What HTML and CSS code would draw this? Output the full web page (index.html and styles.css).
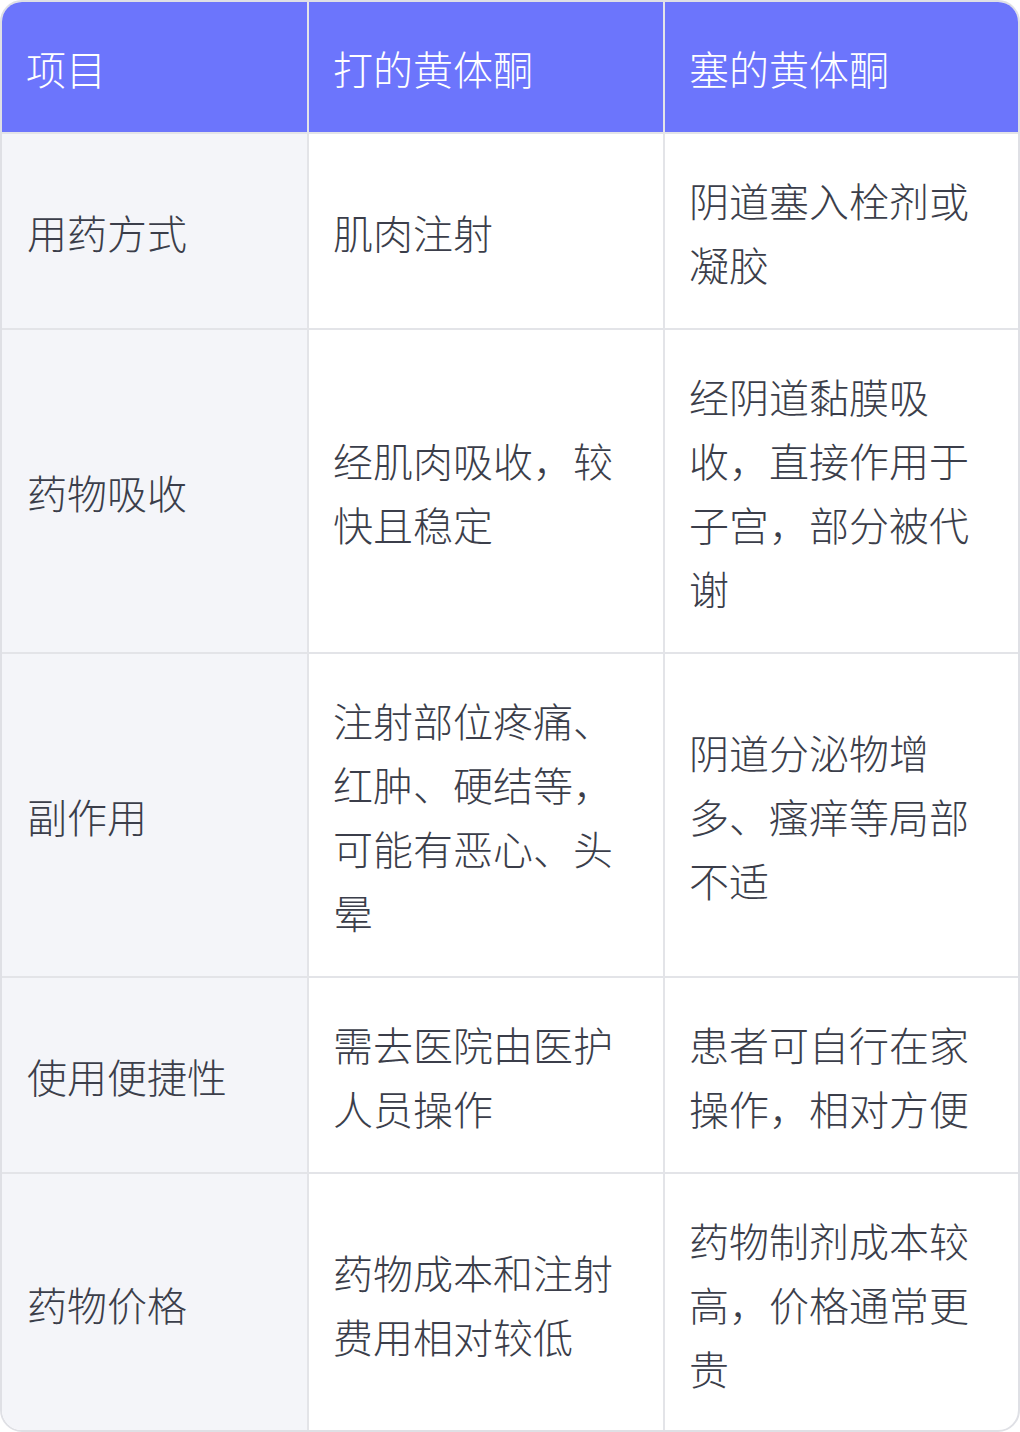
FILE: index.html
```html
<!DOCTYPE html>
<html lang="zh-CN">
<head>
<meta charset="utf-8">
<link rel="stylesheet" href="styles.css">
</head>
<body>
<div class="wrap">
<table class="cmp">
<colgroup><col class="c1"><col class="c2"><col class="c3"></colgroup>
<thead>
<tr><th>项目</th><th>打的黄体酮</th><th>塞的黄体酮</th></tr>
</thead>
<tbody>
<tr><td class="key">用药方式</td><td>肌肉注射</td><td>阴道塞入栓剂或凝胶</td></tr>
<tr><td class="key">药物吸收</td><td>经肌肉吸收，较快且稳定</td><td>经阴道黏膜吸收，直接作用于子宫，部分被代谢</td></tr>
<tr><td class="key">副作用</td><td>注射部位疼痛、红肿、硬结等，可能有恶心、头晕</td><td>阴道分泌物增多、瘙痒等局部不适</td></tr>
<tr><td class="key">使用便捷性</td><td>需去医院由医护人员操作</td><td>患者可自行在家操作，相对方便</td></tr>
<tr><td class="key">药物价格</td><td>药物成本和注射费用相对较低</td><td>药物制剂成本较高，价格通常更贵</td></tr>
</tbody>
</table>
</div>
</body>
</html>
```
FILE: styles.css
```css
html, body {
  margin: 0;
  padding: 0;
  background: #ffffff;
}
.wrap {
  width: 1020px;
  box-sizing: border-box;
  border: 2px solid #dfe0e5;
  border-radius: 22px;
  overflow: hidden;
}
.cmp {
  width: 100%;
  table-layout: fixed;
  border-collapse: separate;
  border-spacing: 0;
  font-family: "Noto Sans CJK SC", "Noto Sans", sans-serif;
  font-size: 40px;
  line-height: 64px;
  color: #3b3e4a;
}
.c1 { width: 307px; }
.c2 { width: 356px; }
.c3 { width: auto; }
.cmp th, .cmp td {
  text-align: left;
  vertical-align: middle;
  padding: 34px 24px 32px 24px;
  border-right: 2px solid #e3e4e8;
  border-bottom: 2px solid #e3e4e8;
  font-weight: 300;
}
.cmp th:last-child, .cmp td:last-child {
  border-right: none;
}
.cmp tbody tr:last-child td {
  border-bottom: none;
  padding-bottom: 30px;
}
.cmp th {
  background: #6c75fc;
  color: #ffffff;
}
.cmp td.key {
  background: #f4f5f9;
  padding-left: 25px;
}
```
